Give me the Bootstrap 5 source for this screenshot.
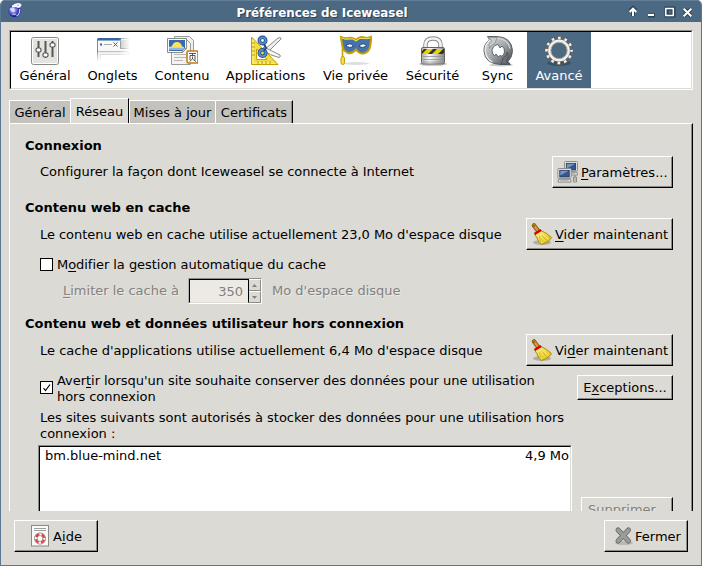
<!DOCTYPE html>
<html lang="fr">
<head>
<meta charset="utf-8">
<title>Préférences de Iceweasel</title>
<link href="https://cdn.jsdelivr.net/npm/bootstrap@5.3.0/dist/css/bootstrap.min.css" rel="stylesheet">
<style>
body{background:#fff;font:13px/16px "DejaVu Sans",sans-serif;color:#000;overflow:hidden}
svg{display:block;flex:none}
u{text-underline-offset:2px;text-decoration-thickness:1px;text-decoration-skip-ink:none}
.win{width:702px;height:566px;background:#dbdad5;border:1px solid #5c7793;border-top:0;border-radius:5px 5px 0 0;overflow:hidden}
.titlebar{height:22px;background:#4b6983;border-top:1px solid #637e96;color:#fff;font-weight:bold;font-size:11.9px;text-shadow:1px 1px 0 #2b4157;padding:0 5px 0 6px}
.caption{padding-right:7px;padding-top:4px}
.tools{margin:8px 8px 0;height:60px;border:1px solid;border-color:#8d8b86 #fff #fff #b5b3ae}
.tools-in{height:58px;border:1px solid;border-color:#000 #dbdad5 #dbdad5 #000;background:#fff;padding-left:1px}
.tool{height:56px;padding-top:3px;line-height:17px}
.tool.sel{background:#4b6983;color:#fff}
.tabrow{height:25px;margin:8px 8px 0}
.tabx{height:23px;background:#c4c2bd;border-top:1px solid #fff;border-left:1px solid #fff;line-height:23px;text-align:center;white-space:nowrap}
.tabx.on{height:25px;background:#dbdad5;line-height:25px;border-right:1px solid #000}
.tabx.end{border-right:1px solid #000;box-shadow:inset -1px 0 #8d8b86}
.panel{height:388px;margin:0 8px;border:1px solid #fff;border-bottom:0;border-right-color:#000;box-shadow:inset -1px 0 #8d8b86;padding:10px 19px 0 15px;overflow:hidden}
.head{height:22px;line-height:24px;font-weight:bold;font-size:13px}
.ind{margin-left:15px}
.rowb{height:32px}
.drop{padding-top:2px}
.tight{letter-spacing:-.045px}
.btnx{height:32px;border:1px solid;border-color:#fff #000 #000 #fff;box-shadow:inset -1px -1px #8d8b86;background:#dbdad5;white-space:nowrap;flex:none}
.boxx{width:13px;height:13px;border:1px solid #000;background:#fff;margin-right:4px;flex:none}
.dim{color:#83817d;text-shadow:1px 1px 0 #eceae6}
.spin{width:74px;height:26px;border:1px solid;border-color:#8d8b86 #fff #fff #b5b3ae}
.spin-in{width:60px;height:24px;border:1px solid #000;border-bottom-color:#dbdad5;background:#edeae6;padding-right:5px;line-height:24px;text-align:right}
.step{width:12px;height:12px;border:1px solid #8d8b86;border-left:0;border-top-color:#fff}
.listx{width:534px;height:80px;border:1px solid;border-color:#8d8b86 #fff #fff #8d8b86}
.list-in{height:100%;background:#fff;border:1px solid;border-color:#000 #dbdad5 #fff #000;padding:1px 1px 0 5px}
</style>
</head>
<body>
<svg width="0" height="0" class="position-absolute">
<defs>
<linearGradient id="gy" x1="0" y1="0" x2="1" y2="1"><stop stop-color="#fff394"/><stop offset="1" stop-color="#d8b500"/></linearGradient>
<linearGradient id="gs" x1="0" y1="0" x2="1" y2="1"><stop stop-color="#e4e5e6"/><stop offset=".5" stop-color="#a3a7aa"/><stop offset="1" stop-color="#3f4448"/></linearGradient>
<linearGradient id="gl" x1="0" y1="0" x2="1" y2="0"><stop stop-color="#aaa"/><stop offset=".35" stop-color="#fff"/><stop offset="1" stop-color="#888"/></linearGradient>
<radialGradient id="gg" cx=".4" cy=".45"><stop stop-color="#d6d8ff"/><stop offset=".5" stop-color="#6a70e4"/><stop offset="1" stop-color="#1c1790"/></radialGradient>
<symbol id="broom" viewBox="0 0 24 24">
<ellipse cx="12" cy="20.500" rx="9" ry="2.500" fill="#000" opacity=".2"/>
<path d="M4 3.500l4.500 6" stroke="#8f5902" stroke-width="4.500" stroke-linecap="round"/><path d="M4 3.500l4.500 6" stroke="#d49a42" stroke-width="2.500" stroke-linecap="round"/><circle cx="4" cy="4" r="1" fill="#80591b"/>
<path d="M5 12.500Q6.500 8.500 11 8.500Q17 11 21.500 15.500Q20 19.500 11.500 22.500Q10 21.500 8.800 20Q7 15.500 5 12.500Z" fill="url(#gy)" stroke="#ab8e00"/>
<path d="M8 13l4 8M10 12l5.500 7M11.500 11l7 6.500" stroke="#fff47a" stroke-width=".8" fill="none"/><path d="M9 14l2 6M12 13.500l4 5" stroke="#b79a00" stroke-width=".6"/>
<path d="M4.500 12L11 8" stroke="#d80000" stroke-width="2.600"/>
</symbol>
<symbol id="pc" viewBox="0 0 15 16"><rect x=".5" y=".5" width="14" height="10.500" rx="1" fill="#f1f1ee" stroke="#85857f"/><rect x="2.500" y="2.500" width="10" height="7" fill="#35578f" stroke="#1c3765"/><path d="M3 3h9L3 8z" fill="#7895be"/><path d="M1 12h13l.5 3H.5z" fill="#e8e8e5" stroke="#85857f"/><path d="M3 13.500h9" stroke="#aaa"/></symbol>
</defs>
</svg>
<div class="win d-flex flex-column">
  <div class="titlebar d-flex align-items-start flex-shrink-0">
    <svg width="16" height="18" viewBox="0 0 16 18"><circle cx="7.500" cy="9.800" r="6.300" fill="url(#gg)"/><path d="M2.500 8q2-2 4-1t1 4l-3-.5zM4.500 13.500q3-2 5 .5" fill="#e0e2ff" opacity=".85"/><path d="M5 4.500Q8 2 11 2q3.500 0 3.500 2.500L13 6.500l-2 .5-2-1-4 .5z" fill="#f5f5ff"/><circle cx="11" cy="4" r=".6" fill="#55a"/><path d="M12.500 8q1 5-3 7" stroke="#c7cafc" stroke-width="1.300" fill="none"/></svg>
    <div class="caption flex-grow-1 text-center">Préférences de Iceweasel</div>
    <svg width="68" height="20" viewBox="0 0 68 20"><g stroke="#2d4355" stroke-width="4" fill="none"><path d="M5 15V9M2 10l3-3 3 3M20 14.500h7M38.500 7.500h7v7h-7zM56 8l7 7M63 8l-7 7"/></g><g stroke="#fff" stroke-width="2" fill="none"><path d="M5 15V8M1.700 11L5 7.700 8.300 11M20 14h6M55.700 7.700l7.600 7.600M63.300 7.700l-7.600 7.600"/><path d="M37.800 7.500h7.500v7h-7.500z" stroke-width="1.500"/></g></svg>
  </div>

  <div class="tools flex-shrink-0"><div class="tools-in d-flex">
    <div class="tool d-flex flex-column align-items-center" style="width:66px">
      <svg width="32" height="32" viewBox="0 0 32 32"><rect x="2.500" y="2.500" width="27" height="27" rx="2" fill="#e3e3df" stroke="#888a85"/><rect x="3.500" y="3.500" width="25" height="25" rx="1" fill="none" stroke="#fff"/><path d="M9.500 6v16M16.500 6v17M23.500 6v16" stroke="#555753" stroke-width="2"/><g fill="#fff" stroke="#555753" stroke-width="1.200"><rect x="7" y="13" width="5" height="4" rx="1.500"/><rect x="14" y="18" width="5" height="4" rx="1.500"/><rect x="21" y="8" width="5" height="4" rx="1.500"/></g></svg>
      <div>Général</div></div>
    <div class="tool d-flex flex-column align-items-center" style="width:69px">
      <svg width="32" height="32" viewBox="0 0 32 32"><defs><linearGradient id="fd" x1="0" y1="0" x2="0" y2="1"><stop offset=".5" stop-color="#fff" stop-opacity="0"/><stop offset=".85" stop-color="#fff"/></linearGradient><linearGradient id="fr" x1="0" y1="0" x2="1" y2="0"><stop offset=".65" stop-color="#fff" stop-opacity="0"/><stop offset="1" stop-color="#fff"/></linearGradient></defs><path d="M.5 27V5Q.5 3.500 2 3.500H32V27" fill="#eeeeec" stroke="#888a85"/><path d="M0 7V5Q0 3 2 3H24V5.500H0z" fill="#3465a4"/><path d="M1 6h22v8h9v3H1z" fill="#f8f8f7"/><path d="M23.500 6v7.500H32" stroke="#888a85" fill="none"/><path d="M24 5h8v8h-8z" fill="#c8cac6"/><path d="M7 9.500h8" stroke="#aaa"/><rect x="3" y="8.500" width="2" height="2" fill="#3465a4"/><path d="M16.500 7.500l4 4M20.500 7.500l-4 4" stroke="#555753"/><path d="M1 16.500h31" stroke="#babdb6"/><rect x="3.500" y="19.500" width="29" height="9" fill="#fff" stroke="#ccc"/><rect width="32" height="32" fill="url(#fd)"/><rect width="33" height="32" fill="url(#fr)"/></svg>
      <div>Onglets</div></div>
    <div class="tool d-flex flex-column align-items-center" style="width:70px">
      <svg width="32" height="32" viewBox="0 0 32 32"><path d="M8.500 1.500h15l4 4v20h-19z" fill="#eee" stroke="#999b96"/><path d="M5.500 4.500h15l4 4v21h-19z" fill="#f4f4f2" stroke="#999b96"/><path d="M8 19.500h12M8 22.500h12M8 25.500h9" stroke="#b5b7b2"/><path d="M1.500 3.500h19v10l-4 4h-15z" fill="#fff" stroke="#888a85"/><path d="M3 5h16v8l-2.500 3H3z" fill="#3569b0"/><path d="M3 12q8-4 15 0v3H3z" fill="#8fb7df"/><path d="M6 12a5 5 0 0 1 10 0z" fill="#f8e35d"/><path d="M3 12.500h15" stroke="#f6d74d"/><path d="M16 18q0-4 4.500-5z" fill="#fff" stroke="#888a85"/><rect x="21" y="16" width="11" height="12" rx="1.500" fill="#fff" stroke="#c17d11" stroke-width="1.600"/><path d="M23 18.500h7M26.500 18.500v2M24 25v-4.500h5V25M26.500 21.500v2.500l-3 2.500M27 24.500l3 2" stroke="#444" fill="none" stroke-width=".9"/></svg>
      <div>Contenu</div></div>
    <div class="tool d-flex flex-column align-items-center" style="width:97px">
      <svg width="32" height="32" viewBox="0 0 32 32"><path fill-rule="evenodd" d="M1.500 2v27.500H28zM6.500 14v10.500H17z" fill="#f3dc45" stroke="#c4a000"/><path d="M3 5v23h21" stroke="#fff59a" fill="none"/><path d="M2 8h3M2 12h3M2 16h3M2 20h3M8 29v-3M12 29v-3M16 29v-3M20 29v-3" stroke="#a98b00" stroke-width=".8"/><path d="M14 15L28 3q4-1 3 1L17 18z" fill="#eee" stroke="#888a85"/><path d="M14 12l16 8q1 2-1 2.500Q20 21 12 14z" fill="#f6f6f5" stroke="#888a85"/><circle cx="12.500" cy="5.500" r="3.200" fill="#fff" stroke="#204a87" stroke-width="3.600"/><circle cx="12.500" cy="5.500" r="3.200" fill="none" stroke="#5d8fc9" stroke-width="1.800"/><circle cx="12.500" cy="18" r="3.200" fill="#f3dc45" stroke="#204a87" stroke-width="3.600"/><circle cx="12.500" cy="18" r="3.200" fill="none" stroke="#5d8fc9" stroke-width="1.800"/><path d="M14 9l2 4-2 3" stroke="#204a87" stroke-width="2" fill="none"/></svg>
      <div>Applications</div></div>
    <div class="tool d-flex flex-column align-items-center" style="width:83px">
      <svg width="32" height="32" viewBox="0 0 32 32"><ellipse cx="16" cy="28.500" rx="13" ry="1.500" fill="#ddd"/><path d="M2.500 5v22" stroke="#c4a000" stroke-width="1.600"/><rect x="1" y="21.500" width="3.500" height="8" rx="1.700" fill="#f5df40" stroke="#c4a000"/><path d="M.8 2Q5 4 9 3q4-1 7 2 4-4 8-2.500 4 1 7.200-.5-.2 5-1 9-.7 5-5.200 7-5 2-9-3.500Q12 19 8 18 3 16 2.500 11z" fill="#4771ad" stroke="#c4a000" stroke-width="2"/><path d="M1.500 3Q5 5 9 4q4-1 7 2 4-4 8-2.500 3 .7 6-.5" fill="none" stroke="#f8e75c"/><path d="M6 10.500Q10 7 13.500 11q-4 3-7.500-.5zM19 11q4-4 7.500-.500-4 3.500-7.500.500z" fill="#fff" stroke="#1f4279"/></svg>
      <div>Vie privée</div></div>
    <div class="tool d-flex flex-column align-items-center" style="width:71px">
      <svg width="32" height="32" viewBox="0 0 32 32"><ellipse cx="16" cy="29" rx="14" ry="2" fill="#ccc"/><path d="M8.500 16V10Q8.500 3.500 16 3.500T23.500 10v6" stroke="#888a85" stroke-width="4.500" fill="none"/><path d="M8.500 16V10Q8.500 3.500 16 3.500T23.500 10v6" stroke="#f3f3f1" stroke-width="2.700" fill="none"/><rect x="4.500" y="12.500" width="23" height="16.500" rx="1.500" fill="url(#gl)" stroke="#666864"/><rect x="5" y="14" width="22" height="5" fill="#edd400"/><path d="M5 19v-3l2-2h3l-5 5zM11 19l5-5h4l-5 5zM21 19l5-5h1v4l-1 1z" fill="#333"/><path d="M6 21.500h20M6 24.500h20M6 27h20" stroke="#90928e" stroke-width=".8"/></svg>
      <div>Sécurité</div></div>
    <div class="tool d-flex flex-column align-items-center" style="width:59px">
      <svg width="32" height="32" viewBox="0 0 32 32"><ellipse cx="19" cy="30" rx="12" ry="1.500" fill="#ccc"/><path fill-rule="evenodd" d="M5.500 1.500H15Q29.500 2 30.500 15.500 30.500 22 26 26.500l2.500 3H18q-15-1-16-13Q1.500 9 7.500 4.800zM16 9.500l2 3.500 2-2q3 2.500 2.500 6-.5 3-3 4.500l-1-1.500-2 2-2.500-3-1.500 2q-3-3-2.500-6 1-4 4-5z" fill="url(#gs)" stroke="#53585c" stroke-width=".9"/><path d="M8 5q-6 5-4.500 13 1.500 6 7 9" stroke="#eceded" stroke-width="1.200" fill="none"/><path d="M16 3.500q10 1 12 10" stroke="#d5d7d9" stroke-width="1.200" fill="none"/><path d="M7 2.500h8l-2 6q-4 1-5.500 5-2-4 2-8z" fill="#c9cccd" stroke="#73787b" stroke-width=".6"/><path d="M27 29h-8l2-6q4-2 4-6 3 4-1 9z" fill="#6b7074" stroke="#3f4448" stroke-width=".6"/></svg>
      <div>Sync</div></div>
    <div class="tool sel d-flex flex-column align-items-center" style="width:64px">
      <svg width="32" height="32" viewBox="0 0 32 32"><ellipse cx="16" cy="28" rx="12" ry="3" fill="#253a4c" opacity=".5"/><circle cx="16" cy="15.500" r="11.800" fill="none" stroke="#625d55" stroke-width="5.400" stroke-dasharray="4 2.178" stroke-dashoffset="2"/><circle cx="16" cy="15.500" r="11.800" fill="none" stroke="#f3f2ee" stroke-width="4" stroke-dasharray="2.500 3.678" stroke-dashoffset="1.250"/><circle cx="16" cy="15.500" r="9.300" fill="none" stroke="#625d55" stroke-width="4"/><circle cx="16" cy="15.500" r="9.500" fill="none" stroke="#f1f0ec" stroke-width="2.800"/><circle cx="16" cy="15.500" r="8.200" fill="none" stroke="#aaa69d"/></svg>
      <div>Avancé</div></div>
  </div></div>

  <div class="tabrow d-flex align-items-end flex-shrink-0">
    <div class="tabx" style="width:61px">Général</div>
    <div class="tabx on" style="width:59px">Réseau</div>
    <div class="tabx" style="width:86px">Mises à jour</div>
    <div class="tabx end" style="width:78px">Certificats</div>
  </div>

  <div class="panel flex-shrink-0">
    <div class="head">Connexion</div>
    <div class="rowb ind d-flex align-items-center justify-content-between">
      <div class="tight">Configurer la façon dont Iceweasel se connecte à Internet</div>
      <div class="btnx d-flex align-items-center" style="width:121px;padding-left:4px">
        <svg width="21" height="22" viewBox="0 0 21 22" class="me-1"><use href="#pc" x="7" y="0" width="14" height="15"/><use href="#pc" x="0" y="7" width="15" height="15"/><path d="M18 14v6M16.500 16v5h3v-5z" stroke="#888a85" fill="#eee"/></svg>
        <div class="drop" style="margin-left:-1px"><u>P</u>aramètres...</div></div>
    </div>
    <div class="head mt-2">Contenu web en cache</div>
    <div class="rowb ind d-flex align-items-center justify-content-between">
      <div class="drop tight">Le contenu web en cache utilise actuellement 23,0 Mo d'espace disque</div>
      <div class="btnx d-flex align-items-center" style="width:147px;padding-left:3px"><svg width="24" height="24"><use href="#broom"/></svg><div class="drop" style="margin-left:1px"><u>V</u>ider maintenant</div></div>
    </div>
    <div class="ind d-flex align-items-center" style="height:28px"><span class="boxx"></span><div class="drop tight">M<u>o</u>difier la gestion automatique du cache</div></div>
    <div class="ind d-flex align-items-center dim" style="height:26px;padding-left:23px">
      <div style="width:125px"><u>L</u>imiter le cache à</div>
      <div class="spin d-flex"><div class="spin-in">350</div><div><div class="step d-flex align-items-center justify-content-center"><svg width="5" height="3"><path d="M0 3L2.500 0 5 3z" fill="#83817d"/></svg></div><div class="step d-flex align-items-center justify-content-center"><svg width="5" height="3"><path d="M0 0L2.500 3 5 0z" fill="#83817d"/></svg></div></div></div>
      <div style="margin-left:10px">Mo d'espace disque</div>
    </div>
    <div class="head mt-2">Contenu web et données utilisateur hors connexion</div>
    <div class="rowb ind d-flex align-items-center justify-content-between">
      <div class="drop">Le cache d'applications utilise actuellement 6,4 Mo d'espace disque</div>
      <div class="btnx d-flex align-items-center" style="width:147px;padding-left:3px"><svg width="24" height="24"><use href="#broom"/></svg><div class="drop" style="margin-left:1px">Vi<u>d</u>er maintenant</div></div>
    </div>
    <div class="ind d-flex align-items-center" style="height:32px;margin-top:6px">
      <span class="boxx" style="margin-bottom:2px"><svg width="11" height="11"><path d="M2.500 6L4.500 8.500 9 2.500" fill="none" stroke="#000" stroke-width="1.200"/></svg></span>
      <div class="flex-grow-1 drop tight">Aver<u>t</u>ir lorsqu'un site souhaite conserver des données pour une utilisation<br>hors connexion</div>
      <div class="btnx d-flex align-items-center justify-content-center" style="width:96px;height:25px;margin-bottom:1px">E<u>x</u>ceptions...</div>
    </div>
    <div class="ind" style="margin-top:6px">Les sites suivants sont autorisés à stocker des données pour une utilisation hors<br>connexion :</div>
    <div class="d-flex align-items-start" style="margin:3px 0 0 13px">
      <div class="listx"><div class="list-in d-flex justify-content-between"><span>bm.blue-mind.net</span><span>4,9 Mo</span></div></div>
      <div class="btnx dim d-flex align-items-center" style="width:92px;height:25px;margin:52px 0 0 9px;padding-left:6px">Supprimer...</div>
    </div>
  </div>

  <div class="d-flex justify-content-between" style="padding:9px 13px 0">
    <div class="btnx d-flex align-items-center justify-content-center" style="width:84px">
      <svg width="20" height="22" viewBox="0 0 20 22" style="margin-right:3px"><rect x="1.500" y=".5" width="17" height="20.500" fill="#fafaf8" stroke="#888a85"/><path d="M4 3.500h12M4 5.500h12" stroke="#9aa09a"/><circle cx="10" cy="13.500" r="4.200" fill="#fff" stroke="#777" stroke-width="3.400"/><circle cx="10" cy="13.500" r="4.200" fill="none" stroke="#fff" stroke-width="2.200"/><circle cx="10" cy="13.500" r="4.200" fill="none" stroke="#e04545" stroke-width="2.200" stroke-dasharray="4.200 2.397" stroke-dashoffset="-1.200"/></svg><div class="drop">A<u>i</u>de</div></div>
    <div class="btnx d-flex align-items-center" style="width:84px;padding-left:7px">
      <svg width="22" height="22" viewBox="0 0 22 22"><ellipse cx="12" cy="18" rx="9" ry="2" fill="#000" opacity=".15"/><path d="M6 5l10.500 11M16.500 5L6 16" stroke="#666864" stroke-width="5" stroke-linecap="round"/><path d="M6 5l10.500 11M16.500 5L6 16" stroke="#9b9d99" stroke-width="3.400" stroke-linecap="round"/></svg><div class="drop" style="margin-left:1px">Fermer</div></div>
  </div>
</div>
<script src="https://cdn.jsdelivr.net/npm/bootstrap@5.3.0/dist/js/bootstrap.bundle.min.js"></script>
</body>
</html>
